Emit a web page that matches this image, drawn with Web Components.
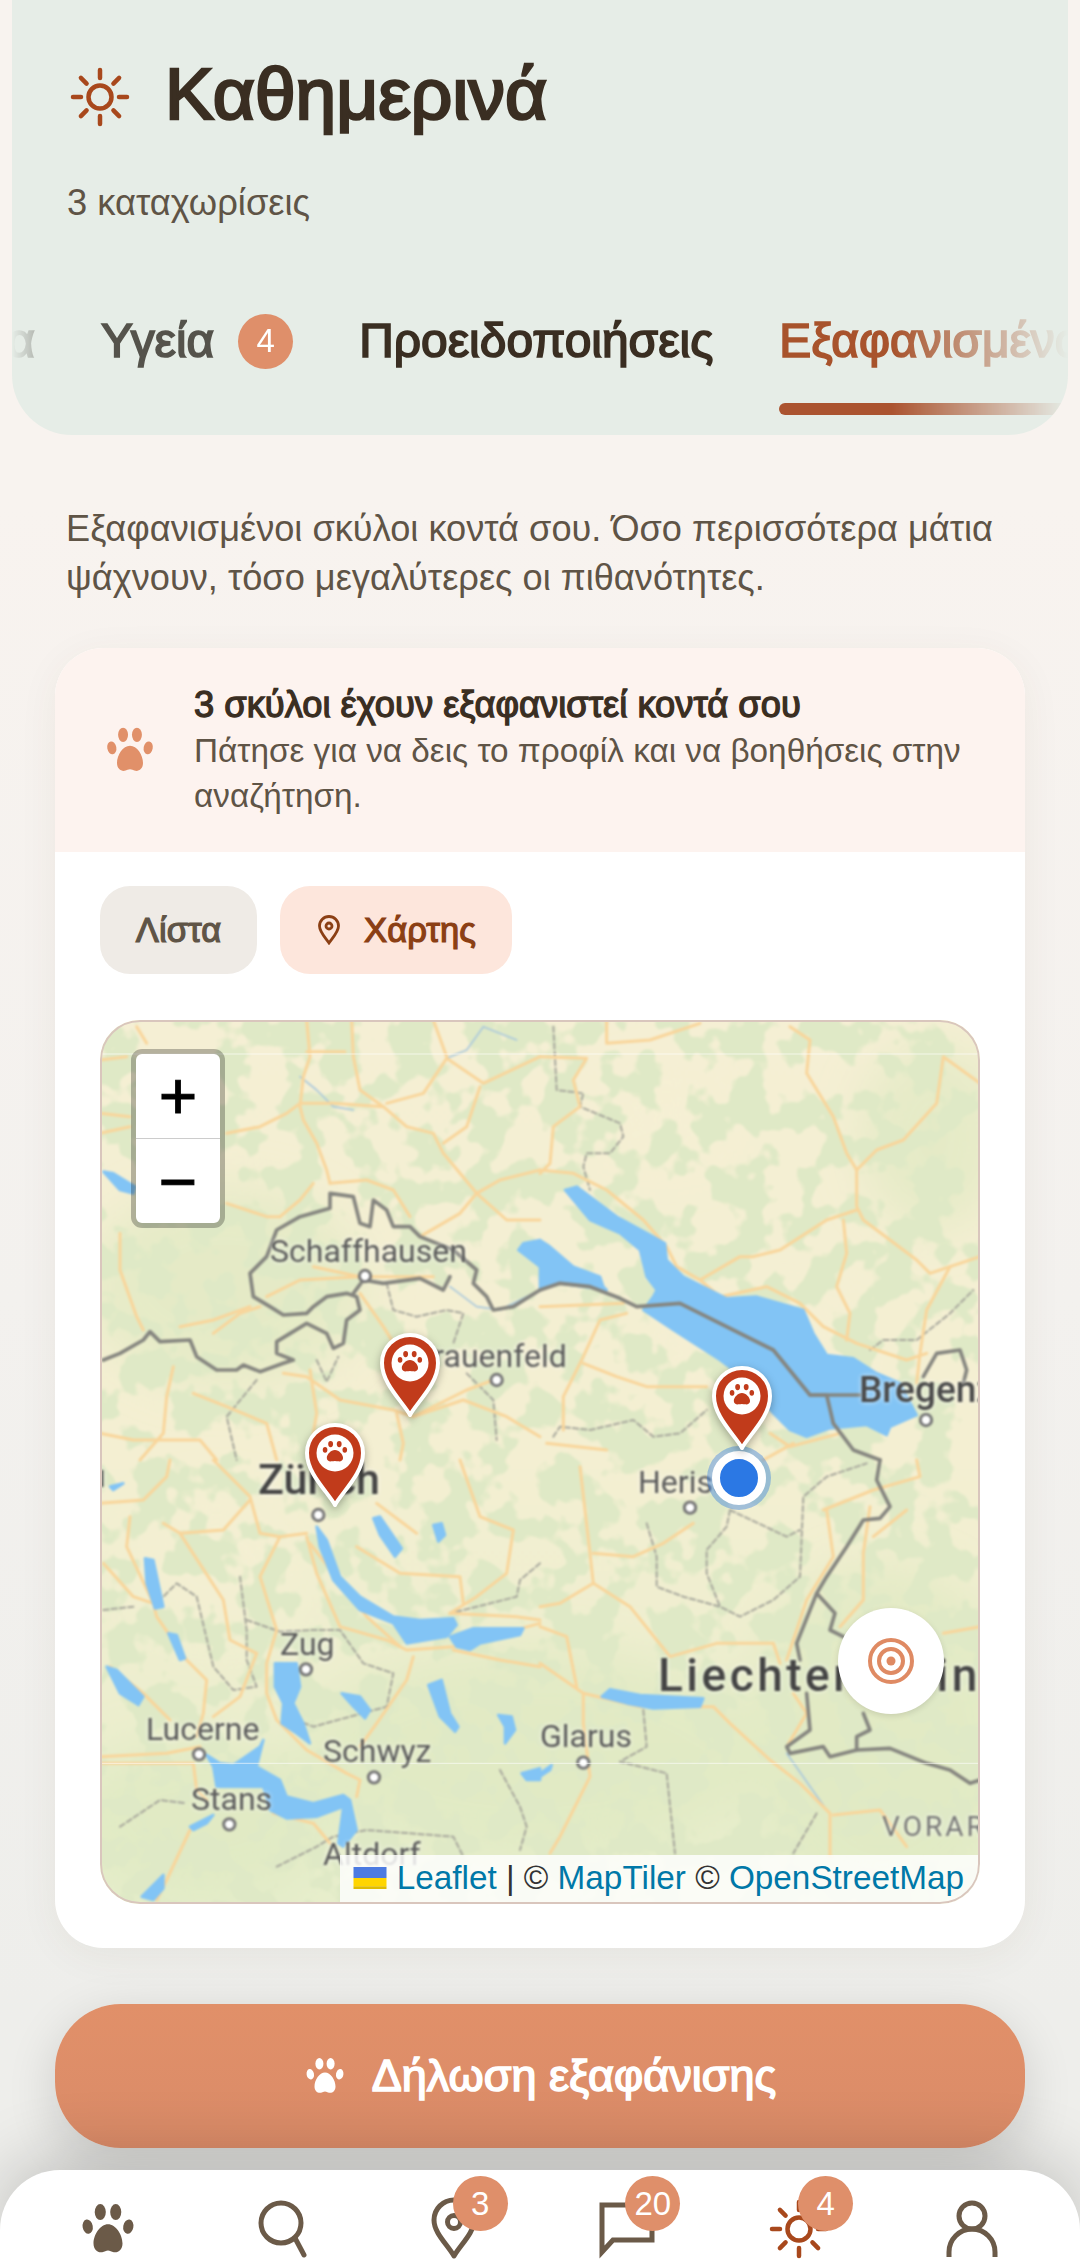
<!DOCTYPE html>
<html lang="el">
<head>
<meta charset="utf-8">
<title>Καθημερινά</title>
<style>
html,body{margin:0;height:100%;}
body{font-family:"Liberation Sans",Arial,sans-serif;color:#3a2e22;background:#f8f3ef;overflow:hidden;}
</style>
</head>
<body>
<app-page>
  <page-header heading="Καθημερινά" sub="3 καταχωρίσεις"></page-header>
  <intro-text>Εξαφανισμένοι σκύλοι κοντά σου. Όσο περισσότερα μάτια ψάχνουν, τόσο μεγαλύτερες οι πιθανότητες.</intro-text>
  <lost-card>
    <span slot="title">3 σκύλοι έχουν εξαφανιστεί κοντά σου</span>
    <span slot="text">Πάτησε για να δεις το προφίλ και να βοηθήσεις στην αναζήτηση.</span>
    <leaflet-map></leaflet-map>
  </lost-card>
  <report-button>Δήλωση εξαφάνισης</report-button>
  <bottom-nav></bottom-nav>
</app-page>

<script>
const pawShape = `<ellipse cx="8.800" cy="5" rx="2.300" ry="3.300"/><ellipse cx="15.200" cy="5" rx="2.300" ry="3.300"/>
  <ellipse cx="3.600" cy="11" rx="2.100" ry="3" transform="rotate(-10 3.600 11)"/><ellipse cx="20.400" cy="11" rx="2.100" ry="3" transform="rotate(10 20.400 11)"/>
  <path d="M12 10c-3.200 0-6 4.200-6 8 0 2.600 1.800 3.900 3.600 3.600 1-.2 1.600-.7 2.400-.7s1.400.5 2.400.7c1.800.3 3.600-1 3.600-3.600 0-3.800-2.800-8-6-8z"/>`;

// the reference bold is a thickened regular face, so bold text is regular plus an outline
const fauxBold = 'font-weight:400;-webkit-text-stroke:.036em currentColor;';

function pawIcon(size, color) {
   return `<svg width="${size}" height="${size}" viewBox="0 0 24 24" fill="${color}">${pawShape}</svg>`;
}

function sunIcon(size, color, width) {
   let rays = '';
   for (let i = 0; i < 8; i++) {
      rays += `<line x1="30" y1="3" x2="30" y2="11" transform="rotate(${i * 45} 30 30)"/>`;
   }
   return `<svg width="${size}" height="${size}" viewBox="0 0 60 60" fill="none" stroke="${color}" stroke-width="${width}" stroke-linecap="round"><circle cx="30" cy="30" r="11.500"/>${rays}</svg>`;
}

class AppPage extends HTMLElement {
   constructor() {
      super();
      this.attachShadow({mode: 'open'});
      this.shadowRoot.innerHTML = `
      <style>
      :host{display:flex;flex-direction:column;height:2268px;position:relative;overflow:hidden;
         background:linear-gradient(180deg,#f8f3ef 0,#f8f3ef 500px,#f3f1ee 1300px,#eeeeeb 2000px);}
      </style>
      <slot></slot>`;
   }
}
customElements.define('app-page', AppPage);

class PageHeader extends HTMLElement {
   constructor() {
      super();
      this.attachShadow({mode: 'open'});
   }
   connectedCallback() {
      this.shadowRoot.innerHTML = `
      <style>
      :host{display:block;margin:0 12px;height:435px;background:#e6ede7;border-radius:0 0 60px 60px;box-sizing:border-box;padding-top:46px;overflow:hidden;}
      .top{display:flex;align-items:center;gap:35px;padding-left:58px;height:96px;}
      .top svg{position:relative;top:3px;}
      h1{margin:0;font-size:73px;${fauxBold}color:#3a2e22;line-height:96px;}
      p{margin:0;padding:39px 0 0 55px;font-size:36.300px;line-height:44px;color:#5f5446;}
      tab-strip{margin-top:85px;}
      </style>
      <div class="top">${sunIcon(60, '#a8481c', 4.500)}<h1>${this.getAttribute('heading')}</h1></div>
      <p>${this.getAttribute('sub')}</p>
      <tab-strip></tab-strip>`;
   }
}
customElements.define('page-header', PageHeader);

class TabStrip extends HTMLElement {
   constructor() {
      super();
      this.attachShadow({mode: 'open'});
      this.shadowRoot.innerHTML = `
      <style>
      :host{display:block;overflow:hidden;
         -webkit-mask-image:linear-gradient(90deg,transparent 0,#000 70px,#000 880px,transparent 1056px);
         mask-image:linear-gradient(90deg,transparent 0,#000 70px,#000 880px,transparent 1056px);}
      .row{display:flex;gap:66px;margin-left:-70px;width:1400px;font-size:47.900px;${fauxBold}line-height:62px;color:#3a2e22;}
      .tab{display:flex;align-items:center;gap:24px;padding-bottom:43px;position:relative;white-space:nowrap;}
      .first{width:93px;justify-content:flex-end;}
      .muted{color:#55534c;}
      .badge{width:55px;height:55px;border-radius:50%;background:#df8f6a;color:#fff;font-size:33px;-webkit-text-stroke:0;display:flex;align-items:center;justify-content:center;}
      .active{color:#a8532c;}
      .active::after{content:"";position:absolute;left:0;right:0;bottom:0;height:12px;border-radius:6px;background:#ab5430;}
      </style>
      <div class="row">
        <div class="tab muted first">Νέα</div>
        <div class="tab muted">Υγεία <span class="badge">4</span></div>
        <div class="tab">Προειδοποιήσεις</div>
        <div class="tab active">Εξαφανισμένοι</div>
      </div>`;
   }
}
customElements.define('tab-strip', TabStrip);

class IntroText extends HTMLElement {
   constructor() {
      super();
      this.attachShadow({mode: 'open'});
      this.shadowRoot.innerHTML = `
      <style>
      :host{display:block;padding:69px 60px 0 66px;font-size:36.200px;line-height:49px;color:#5f5446;}
      </style>
      <slot></slot>`;
   }
}
customElements.define('intro-text', IntroText);

class LostCard extends HTMLElement {
   constructor() {
      super();
      this.attachShadow({mode: 'open'});
      this.shadowRoot.innerHTML = `
      <style>
      :host{display:block;margin:46px 55px 0;background:#fff;border-radius:48px;overflow:hidden;box-shadow:0 8px 40px rgba(80,60,40,.06);}
      .alert{display:flex;align-items:center;gap:38px;background:#fdf3ef;padding:34px 44px 34px 49px;}
      .alert svg{flex:none;}
      .words{display:flex;flex-direction:column;}
      .title{font-size:36.300px;${fauxBold}line-height:46px;color:#3a2e22;}
      .text{font-size:33.300px;line-height:45px;color:#5f5446;}
      .switch{display:flex;gap:23px;padding:34px 45px 46px;}
      .btn{height:88px;border-radius:30px;display:flex;align-items:center;gap:22px;font-size:34.600px;${fauxBold}box-sizing:border-box;}
      .list{width:157px;justify-content:center;background:#efebe6;color:#5f5446;}
      .mapb{width:232px;justify-content:center;background:#fde6dc;color:#8b3f14;}
      .body{padding:0 45px 44px;}
      </style>
      <div class="alert">
        ${pawIcon(52, '#e19069')}
        <div class="words"><span class="title"><slot name="title"></slot></span><span class="text"><slot name="text"></slot></span></div>
      </div>
      <div class="switch">
        <div class="btn list">Λίστα</div>
        <div class="btn mapb">
          <svg width="26" height="30" viewBox="0 0 26 30" fill="none" stroke="#8b3f14" stroke-width="2.800"><path d="M13 28C8 21 3.500 16.500 3.500 11a9.500 9.500 0 0 1 19 0c0 5.500-4.500 10-9.500 17z"/><circle cx="13" cy="11" r="3"/></svg>
          Χάρτης
        </div>
      </div>
      <div class="body"><slot></slot></div>`;
   }
}
customElements.define('lost-card', LostCard);

class MapPin extends HTMLElement {
   constructor() {
      super();
      this.attachShadow({mode: 'open'});
      this.shadowRoot.innerHTML = `
      <style>
      :host{display:block;position:absolute;width:62px;height:87px;filter:drop-shadow(0 3px 4px rgba(0,0,0,.3));}
      </style>
      <svg width="62" height="87" viewBox="0 0 62 87">
        <path d="M31 83C24 70 3 52 3 31a28 28 0 0 1 56 0c0 21-21 39-28 52z" fill="#c13b1b" stroke="#fff" stroke-width="4" stroke-linejoin="round"/>
        <circle cx="31" cy="31" r="18.500" fill="#fff"/>
        <g fill="#c13b1b" transform="translate(17 16.500) scale(1.160)">
          <ellipse cx="8.300" cy="4.800" rx="2.100" ry="2.700"/><ellipse cx="15.700" cy="4.800" rx="2.100" ry="2.700"/>
          <ellipse cx="3.500" cy="9.800" rx="2" ry="2.500"/><ellipse cx="20.500" cy="9.800" rx="2" ry="2.500"/>
          <path d="M12 10c-3.500 0-7 3.800-7 6.800 0 2.200 2 3.200 4 2.900 1.200-.2 2-.4 3-.4s1.800.2 3 .4c2 .3 4-.7 4-2.900 0-3-3.500-6.800-7-6.800z"/>
        </g>
      </svg>`;
   }
}
customElements.define('map-pin', MapPin);

// map geometry is in 3x units of the 880x884 map, one group per quadrant
const mapQuads = [
   {dx: 0, dy: 0,
      lakes: ['M10 455L40 460L105 500L100 520L60 510Z', 'M1255 690L1270 670L1320 660V740Z'],
      roads: ['M620 0L630 110L610 170L600 260L610 300L650 370L680 450L690 490', 'M755 0L760 110L780 210L850 260L920 320L1000 340L1030 400L1130 520L1220 600L1320 600',
         'M380 340L480 320L560 280L600 250L700 250L850 260', 'M1320 110L1150 190L1040 115L970 220L860 250', 'M1140 200L1100 320L1030 370',
         'M1320 450L1200 480L1130 520L1080 580L960 650', 'M380 550L500 590L540 590', 'M690 490L800 480L880 510L930 590', 'M640 490L600 540L540 590',
         'M60 640L60 750L110 890L130 930', 'M340 940L420 880L480 860', 'M240 920L340 900L450 860', 'M500 830L600 780L780 770', 'M640 740L780 770L1000 770',
         'M780 820L850 920L900 1000', 'M550 1060L620 1070L720 1140L880 1170L940 1190L1100 1110L1180 1080', 'M890 1180L910 1270L900 1320', 'M940 1190L1090 1140L1220 1190L1320 1250',
         'M0 1240L100 1260L300 1260L350 1320', 'M220 1040L200 1130L190 1240L120 1320', 'M280 1120L380 1160L500 1210L530 1320', 'M630 1050L650 1180L640 1240',
         'M0 120L80 110', 'M0 280L90 290', 'M0 340L90 320', 'M110 20L140 70', 'M620 95H735', 'M1000 0L1040 110'],
      rivers: ['M600 170L650 210L700 260L760 270', 'M1250 60L1150 20L1100 90L1040 115', 'M1050 800L1130 860L1200 870L1320 810'],
      borders: ['M10 1020L60 1000L130 960L150 935L180 965L270 960L290 1010L350 1050L410 1050L430 1035L480 1055L550 1030L580 1020L530 1000L530 965L620 910L680 940L700 985L730 970L740 900L780 870L770 830L740 820L680 830L640 860L620 880L550 885L510 860L460 830L450 760L500 710L530 630L600 590L690 565L690 520L760 530L780 610L810 620L820 540L860 570L880 620L930 620L960 650L1060 690L1130 750L1120 790L1160 830L1180 870L1240 860L1320 810',
         'M760 820L790 780L850 790L960 775L1030 810L1050 770'],
      dashes: ['M470 1080L380 1190L410 1320', 'M860 790L880 870L950 890L1040 870L1090 880L1060 970', 'M1100 1060L1180 1140L1190 1260', 'M650 1020L680 1085L715 1010']},
   {dx: 1320, dy: 0,
      lakes: ['M75 510L110 500L230 590L340 650L375 670L380 720L430 770L560 835L650 830L790 870L820 940L860 1005L940 1015L1010 1060L1080 1090L1130 1185L1050 1220L1040 1245L980 1215L870 1225L800 1250L750 1230L700 1180L620 1080L540 1020L400 930L310 870L340 830L350 810L320 770L300 690L240 640L150 600Z',
         'M0 660L30 680L100 740L180 770L190 800L200 810L130 800L60 790L0 810Z'],
      roads: ['M200 0V70L330 60L480 10', 'M0 110L140 115L100 180L120 260L40 320L30 430L0 460',
         'M0 450L100 460L200 510L310 600L380 680L410 740L480 780L540 830L680 800L780 850L850 920L950 970L1100 1020L1160 1000',
         'M750 20L810 60L800 160L880 290L920 400L950 450V560L970 600L1130 720L1170 760L1230 740L1320 710', 'M1320 190L1210 110L1190 250L1090 360L1010 390L950 450',
         'M950 570L860 600L720 690L640 710H600L480 780', 'M910 600L920 700L890 800L930 880L920 960', 'M1230 740L1160 870L1140 1000L1130 1090',
         'M260 880L180 900L130 1010L70 1130V1230', 'M130 1030L230 1070L320 1100H500', 'M690 1240L750 1280L900 1240', 'M670 1320L760 1270', 'M200 1290L20 1270', 'M0 860L250 850'],
      rivers: [],
      borders: ['M0 810L60 790L150 800L240 835L290 860L420 850L700 990L810 1125H860L880 1210L940 1290L1020 1320', 'M810 1125H960', 'M1150 1070L1190 1000L1260 990L1280 1050L1270 1090'],
      dashes: ['M40 20L50 210L130 220L120 260L240 310L250 350L210 400L140 400L130 440L150 510', 'M990 990L1030 960L1130 960L1230 880L1300 810', 'M40 1250L60 1220L150 1230L280 1200L340 1250L420 1240L500 1170']},
   {dx: 0, dy: 1320,
      lakes: ['M650 200L680 240L720 350L780 410L880 470L960 480L1060 475L1070 495L1040 530L920 550L880 490L780 450L700 360L660 260Z', 'M1050 530L1120 505H1270L1260 525L1140 550L1110 570L1070 560Z',
         'M820 175L840 170L905 265L885 290L840 225Z', 'M1000 195L1025 190L1035 225L1015 245Z', 'M135 295L160 300L190 440L165 445L140 370Z', 'M205 520L230 525L255 595L240 600Z',
         'M20 620L50 630L130 710L115 735L60 700Z', 'M525 610H590L600 680L580 730L610 790L630 850L590 820L545 790L550 730L525 680Z', 'M725 700L780 710L810 750L795 775L760 740Z',
         'M985 675L1025 660L1050 760L1075 800L1065 815L1020 770Z', 'M1195 765L1235 770L1245 810L1215 850V800Z',
         'M320 885L360 910L400 915L480 860L490 840L470 920L540 960L560 1010L640 1030L730 1005L750 1020L770 1110L730 1160L715 1150L730 1040L650 1070L560 1075L510 1050L490 980H350L340 920Z',
         'M270 1100L340 1065L320 1090L280 1110Z', 'M125 1310L190 1245V1285L160 1320Z', 'M1265 940L1320 925V960H1280Z', 'M30 80L70 70L40 90Z'],
      roads: ['M0 130L130 120L200 50L210 0', 'M340 0L450 110L480 220L540 230L620 220', 'M190 190L240 220L370 210L450 120', 'M540 230L480 350L530 510L500 610V700L530 780L620 870L740 940L780 960L770 1010',
         'M620 230L650 340L720 500L860 540L920 570L1060 560L1320 490', 'M630 250L800 470L900 560', 'M90 170L80 260L160 430L170 470L260 600L320 660L310 760L290 830', 'M240 220L370 420L390 540L470 580',
         'M10 310L100 410L160 430', 'M30 620L130 700L210 780', 'M0 890L200 880L300 860', 'M0 910H280L290 990L320 1020', 'M470 580L420 710L340 770', 'M520 1060L640 1090L690 1150',
         'M270 1110L200 1260L170 1320', 'M830 130L950 220', 'M770 260L900 340L1080 350L1090 430', 'M1080 0L1140 170L1240 210L1220 340L1130 410L1050 460', 'M1050 460L1250 470L1320 480', 'M1060 570L1200 600L1320 620', 'M940 590L920 660L830 790L780 860'],
      rivers: [], borders: [],
      dashes: ['M420 350L440 510V600L470 680L400 690L340 620L290 410L230 370L170 430', 'M440 480L540 515L640 510H720L790 610L880 640L860 740L640 800L590 780', 'M10 450L100 440', 'M60 1100L180 1020L260 1030',
         'M530 1220L650 1160L700 1130L800 1110L1060 1130L1090 1190', 'M1200 930L1260 1040L1280 1100L1260 1170', 'M1320 310L1260 360L1250 410L1050 460']},
   {dx: 1320, dy: 1320,
      lakes: ['M185 710L210 688L300 705L490 715L480 740L340 745L260 730Z', 'M0 940L35 915L30 930L0 950Z'],
      roads: ['M120 20L150 280L160 370L270 440L350 540L390 590L530 550H700L720 610', 'M160 280L280 290L370 250L460 190', 'M0 440L60 430L160 370', 'M0 500L80 530L110 680',
         'M0 610L130 700L300 740H520L570 790L690 900L780 970L870 1060V1190', 'M130 700V790L150 950L60 1130L30 1180', 'M880 1065L1020 1050L1100 1160', 'M860 150L880 290L800 420L740 600',
         'M850 150L1000 90L1140 50L1130 0', 'M990 140L970 280V420L900 500', 'M1100 150L1000 230', 'M1210 520L1320 500', 'M760 700L800 760L740 860'],
      rivers: ['M740 880L860 1050'],
      borders: ['M1020 0L1010 60L1050 140L1020 175L970 180L920 260L860 350L830 400L770 550L780 600', 'M830 400L885 460L870 510L910 530', 'M970 760L990 810L950 830V870L870 890L850 860L750 880L740 860L810 810L800 700', 'M950 870L1050 865L1160 910L1230 930L1290 970L1320 960'],
      dashes: ['M320 190L350 290V380L430 410L540 440L600 470L700 420L780 350L790 110L860 50L980 10', 'M570 150L560 200L500 270V340L540 440', 'M570 150L740 230L780 210', 'M310 750L320 860L240 905L380 940L405 1180', 'M830 1060L760 1180']}
];

// x, baseline, font size, extra style
const mapLabels = [
   ['Schaffhausen', 170, 242, 32, ''], ['Frauenfeld', 316, 347, 32, ''], ['Zürich', 158, 475, 43, 'font-weight:500;color:#444;'],
   ['Herisau', 538, 473, 32, ''], ['Bregenz', 759, 383, 37, 'font-weight:500;color:#4a4a4a;'], ['Zug', 180, 635, 32, ''],
   ['Lucerne', 46, 720, 32, ''], ['Schwyz', 223, 742, 32, ''], ['Stans', 91, 790, 32, ''], ['Glarus', 440, 727, 32, ''],
   ['Altdorf', 223, 845, 32, ''], ['Aarau', -78, 467, 32, ''], ['Liechtenstein', 558, 672, 46, 'font-weight:500;letter-spacing:3.500px;color:#444;'],
   ['VORARLBERG', 782, 817, 28, 'letter-spacing:3px;color:#777;']
];

const mapCities = [[795, 768], [1190, 1080], [2478, 1200], [655, 1485], [618, 1948], [297, 2203], [822, 2272], [388, 2413], [1770, 1463], [1450, 2228]];

class LeafletMap extends HTMLElement {
   constructor() {
      super();
      this.attachShadow({mode: 'open'});
   }
   getTiles() {
      const lines = (list, cls) => list.map(d => `<path class="${cls}" d="${d}"/>`).join('');
      const quads = mapQuads.map(q => `<g transform="translate(${q.dx} ${q.dy})">
         ${lines(q.rivers, 'river')}${lines(q.dashes, 'dash')}${lines(q.roads, 'road')}${lines(q.lakes, 'lake')}${lines(q.borders, 'border')}</g>`).join('');
      const cities = mapCities.map(c => `<circle cx="${c[0]}" cy="${c[1]}" r="17" fill="#fff" stroke="#777" stroke-width="9"/>`).join('');
      return `
      <svg class="tiles" viewBox="0 0 2640 2652" preserveAspectRatio="none">
        <defs>
          <linearGradient id="base" x1="0" y1="0" x2="0" y2="1"><stop offset="0" stop-color="#f5efd4"/><stop offset=".5" stop-color="#f4efd2"/><stop offset="1" stop-color="#e7eecc"/></linearGradient>
          <filter id="blot" x="0" y="0" width="100%" height="100%" primitiveUnits="userSpaceOnUse" color-interpolation-filters="sRGB">
            <feTurbulence type="fractalNoise" baseFrequency="0.009" numOctaves="3" seed="23"/>
            <feColorMatrix values="0 0 0 0 .875  0 0 0 0 .915  0 0 0 0 .775  14 0 0 0 -6.600"/>
          </filter>
          <filter id="soft" x="-20%" y="-20%" width="140%" height="140%"><feGaussianBlur stdDeviation="70"/></filter>
          <filter id="fine" x="0" y="0" width="100%" height="100%" color-interpolation-filters="sRGB"><feGaussianBlur stdDeviation="2.600"/></filter>
        </defs>
        <style>
          .tiles path{fill:none;stroke-linejoin:round;stroke-linecap:round;}
          .tiles .road{stroke:#f9d59a;stroke-width:9;}
          .tiles .river{stroke:#a9c8dc;stroke-width:5;}
          .tiles .dash{stroke:#a7a79c;stroke-width:6;stroke-dasharray:16 9;}
          .tiles .lake{fill:#82c4f5;stroke:#82c4f5;stroke-width:8;}
          .tiles .border{stroke:#85857f;stroke-width:11;}
        </style>
        <g filter="url(#fine)">
          <rect width="2640" height="2652" fill="url(#base)"/>
          <g filter="url(#soft)" fill="#dce8bf" opacity=".6">
            <ellipse cx="380" cy="800" rx="420" ry="300"/><ellipse cx="2350" cy="2150" rx="420" ry="520"/><ellipse cx="1300" cy="2200" rx="700" ry="320"/><ellipse cx="300" cy="2400" rx="400" ry="250"/><ellipse cx="2500" cy="350" rx="220" ry="280"/>
          </g>
          <g filter="url(#soft)" fill="#f6f0d4" opacity=".5">
            <ellipse cx="1700" cy="300" rx="200" ry="140"/><ellipse cx="2000" cy="1000" rx="300" ry="160"/><ellipse cx="350" cy="1650" rx="260" ry="220"/>
          </g>
          <rect width="2640" height="2652" filter="url(#blot)"/>
          ${quads}
          ${cities}
        </g>
        <path d="M0 102H2640M0 2230H2640" style="stroke:#fff;stroke-opacity:.75;stroke-width:2.500"/>
      </svg>`;
   }
   connectedCallback() {
      const labels = mapLabels.map(l => `<span class="label" style="left:${l[1]}px;top:${(l[2] - l[3] * 0.86).toFixed(1)}px;font-size:${l[3]}px;${l[4]}">${l[0]}</span>`).join('');
      this.shadowRoot.innerHTML = `
      <style>
      :host{display:block;position:relative;height:884px;border-radius:40px;overflow:hidden;background:#f6f0d4;}
      :host::after{content:"";position:absolute;inset:0;border:2.750px solid #d9c6bd;border-radius:40px;pointer-events:none;}
      .tiles{position:absolute;inset:0;width:100%;height:100%;display:block;}
      .label{position:absolute;line-height:1;white-space:nowrap;font-family:Roboto,"Liberation Sans",sans-serif;color:#5a5a5a;text-shadow:0 0 5px rgba(255,255,255,.75);filter:blur(.8px);}
      .me{position:absolute;left:612px;top:431px;width:54px;height:54px;box-sizing:border-box;border-radius:50%;background:#2b78e4;border:8px solid #fff;box-shadow:0 0 0 5px rgba(43,120,228,.4);}
      .zoom{position:absolute;left:31px;top:29px;width:84px;border:5px solid rgba(0,0,0,.26);border-radius:11px;background:#fff;background-clip:padding-box;}
      .zoom div{height:84px;display:flex;align-items:center;justify-content:center;font:400 66px/1 "Liberation Sans",sans-serif;-webkit-text-stroke:1px #000;color:#000;}
      .zoom div+div{border-top:1.500px solid #ccc;}
      .locate{position:absolute;left:738px;top:588px;width:106px;height:106px;border-radius:50%;background:#fff;display:flex;align-items:center;justify-content:center;box-shadow:0 2px 6px rgba(0,0,0,.12);}
      .attr{position:absolute;right:0;bottom:0;height:49px;box-sizing:border-box;padding:0 16px 4px 13px;display:flex;align-items:center;gap:10px;background:rgba(255,255,255,.82);font:33.300px/45px "Liberation Sans",Arial,sans-serif;color:#333;white-space:nowrap;}
      .attr a{color:#0078a8;text-decoration:none;}
      </style>
      ${this.getTiles()}
      ${labels}
      <div class="me"></div>
      <map-pin style="left:279px;top:312px"></map-pin>
      <map-pin style="left:204px;top:402px"></map-pin>
      <map-pin style="left:611px;top:345px"></map-pin>
      <div class="zoom"><div>+</div><div>−</div></div>
      <div class="locate">
        <svg width="48" height="48" viewBox="0 0 48 48" fill="none" stroke="#df8a63" stroke-width="4"><circle cx="24" cy="24" r="21"/><circle cx="24" cy="24" r="12"/><circle cx="24" cy="24" r="4.500" fill="#df8a63" stroke="none"/></svg>
      </div>
      <div class="attr">
        <svg width="34" height="22" viewBox="0 0 12 8"><path fill="#4C7BE1" d="M0 0h12v4H0z"/><path fill="#FFD500" d="M0 4h12v3H0z"/><path fill="#E0BC00" d="M0 7h12v1H0z"/></svg>
        <span><a href="#">Leaflet</a> | © <a href="#">MapTiler</a> © <a href="#">OpenStreetMap</a></span>
      </div>`;
   }
}
customElements.define('leaflet-map', LeafletMap);

class ReportButton extends HTMLElement {
   constructor() {
      super();
      this.attachShadow({mode: 'open'});
      this.shadowRoot.innerHTML = `
      <style>
      :host{display:flex;align-items:center;justify-content:center;gap:26px;margin:56px 55px 0;height:144px;border-radius:66px;
         background:linear-gradient(180deg,#e19069,#da8b68);color:#fff;font-size:45px;${fauxBold}box-shadow:0 14px 50px rgba(0,0,0,.14);position:relative;}
      </style>
      ${pawIcon(42, '#fff')}<slot></slot>`;
   }
}
customElements.define('report-button', ReportButton);

class NavItem extends HTMLElement {
   constructor() {
      super();
      this.attachShadow({mode: 'open'});
   }
   connectedCallback() {
      const badge = this.getAttribute('badge');
      this.shadowRoot.innerHTML = `
      <style>
      :host{flex:1;display:flex;justify-content:center;position:relative;}
      .wrap{position:relative;width:66px;height:66px;display:flex;align-items:center;justify-content:center;}
      .badge{position:absolute;left:32px;top:-20px;min-width:55px;height:55px;padding:0 1px;box-sizing:border-box;border-radius:28px;background:#df8f6a;color:#fff;font-size:33px;display:flex;align-items:center;justify-content:center;}
      </style>
      <div class="wrap"><slot></slot>${badge ? `<span class="badge">${badge}</span>` : ''}</div>`;
   }
}
customElements.define('nav-item', NavItem);

class BottomNav extends HTMLElement {
   constructor() {
      super();
      this.attachShadow({mode: 'open'});
      const c = '#6b5a48';
      this.shadowRoot.innerHTML = `
      <style>
      :host{display:flex;margin-top:auto;height:98px;box-sizing:border-box;padding:26px 21.600px 0;background:#fff;border-radius:60px 60px 0 0;box-shadow:0 -10px 70px rgba(0,0,0,.2);position:relative;}
      </style>
      <nav-item>${pawIcon(58, c)}</nav-item>
      <nav-item><svg width="66" height="66" viewBox="0 0 66 66" fill="none" stroke="${c}" stroke-width="5" stroke-linecap="round"><circle cx="33" cy="27" r="20"/><path d="M47 42l9 17"/></svg></nav-item>
      <nav-item badge="3"><svg width="66" height="66" viewBox="0 0 66 66" fill="none" stroke="${c}" stroke-width="5" stroke-linejoin="round"><path d="M33 60C26 48 13 37 13 24a20 20 0 0 1 40 0c0 13-13 24-20 36z"/><circle cx="33" cy="26" r="6.500"/></svg></nav-item>
      <nav-item badge="20"><svg width="66" height="66" viewBox="0 0 66 66" fill="none" stroke="${c}" stroke-width="5" stroke-linejoin="miter"><path d="M9 56V9h50v35H20z"/></svg></nav-item>
      <nav-item badge="4">${sunIcon(60, '#a8481c', 4.500)}</nav-item>
      <nav-item><svg width="66" height="66" viewBox="0 0 66 66" fill="none" stroke="${c}" stroke-width="5"><circle cx="33" cy="20" r="13"/><path d="M10 61V56a23 23 0 0 1 46 0v5"/></svg></nav-item>`;
   }
}
customElements.define('bottom-nav', BottomNav);
</script>
</body>
</html>
